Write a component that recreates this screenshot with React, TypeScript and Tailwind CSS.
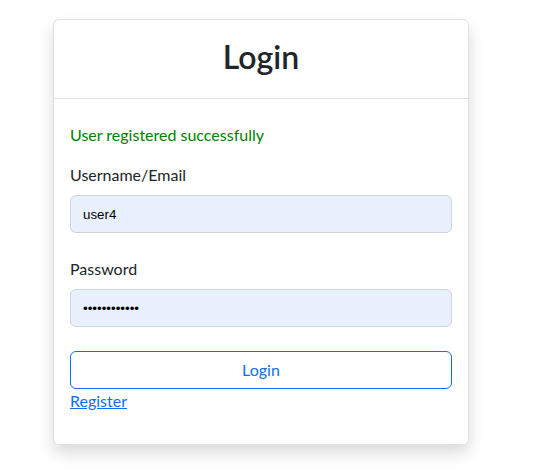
export default function App() {
  return (
    <div className="min-h-screen bg-white pt-[19px] pl-[53px] font-['Lato',sans-serif] text-[#212529]">
      <div className="w-[416px] rounded-[6px] border border-[#dee2e6] bg-white shadow-[0_8px_16px_rgba(0,0,0,0.15)]">
        <div className="border-b border-[#dee2e6] px-4 pt-[18px] pb-[14px]">
          <h2 className="mb-2 text-center text-[32px] leading-[1.2] font-semibold">Login</h2>
        </div>

        <div className="px-4 pt-6 pb-[31px]">
          <p className="mb-4 text-base leading-6 text-[#008000]">User registered successfully</p>

          <div className="mb-6">
            <label className="mb-2 block text-base leading-6">Username/Email</label>
            <input
              type="text"
              defaultValue="user4"
              className="block h-[38px] w-full rounded-[6px] border border-[#ced4da] bg-[#e8f0fe] px-3 font-['Liberation_Sans',Arial,sans-serif] text-[13.33px] text-black outline-none"
            />
          </div>

          <div className="mb-6">
            <label className="mb-2 block text-base leading-6">Password</label>
            <input
              type="password"
              defaultValue="password1234"
              className="block h-[38px] w-full rounded-[6px] border border-[#ced4da] bg-[#e8f0fe] px-3 font-['Liberation_Sans',Arial,sans-serif] text-[13.33px] text-black outline-none"
            />
          </div>

          <button className="block h-[38px] w-full rounded-[6px] border border-[#0d6efd] bg-white text-base text-[#0d6efd]">
            Login
          </button>
          <a href="#" className="text-base leading-6 text-[#0d6efd] underline">
            Register
          </a>
        </div>
      </div>
    </div>
  );
}
